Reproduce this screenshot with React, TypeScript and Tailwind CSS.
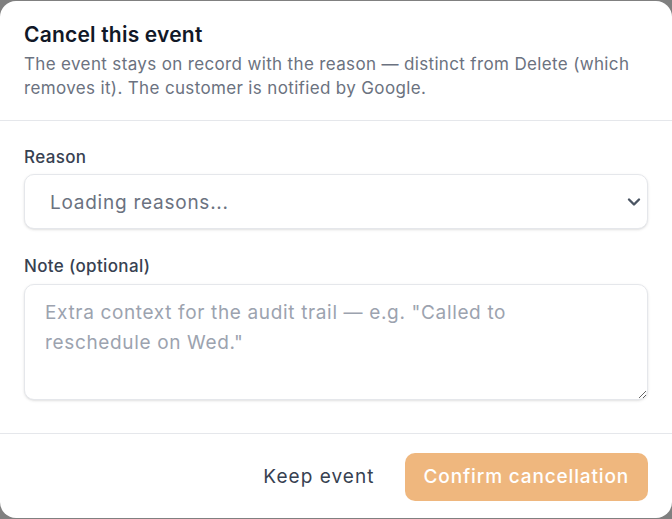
import React from 'react'

export default function App() {
  return (
    <div className="min-h-[519px] bg-[#808080] pt-px" style={{ fontFamily: 'Inter, "Noto Sans", sans-serif' }}>
      <div className="bg-white rounded-2xl overflow-hidden">

        {/* Header */}
        <div className="px-6 pt-5 pb-5 border-b border-[#e5e7eb]">
          <h2 className="text-[21px] leading-[28px] font-semibold tracking-[0.2px] text-[#111827]">Cancel this event</h2>
          <p className="mt-[3px] text-[17px] leading-[24px] tracking-[0.35px] text-[#6b7280]">
            The event stays on record with the reason — distinct from Delete (which removes it). The customer is notified by Google.
          </p>
        </div>

        {/* Body */}
        <div className="px-6 pt-6 pb-[33px]">
          <label className="block text-[17px] leading-[24px] font-medium tracking-[0.35px] text-[#374151] mb-[5px]">Reason</label>
          <div className="relative">
            <select
              disabled
              className="w-full h-[55px] appearance-none rounded-[10px] border border-[#e5e7eb] bg-white pl-[25px] pr-10 pt-[3px] text-[19px] tracking-[0.75px] text-[#6b7280] shadow-sm"
            >
              <option>Loading reasons...</option>
            </select>
            <svg
              className="absolute right-[7px] top-1/2 -translate-y-1/2 pointer-events-none"
              width="14" height="14" viewBox="0 0 14 14" fill="none"
            >
              <path d="M2 4.5l5 5 5-5" stroke="#4b5563" strokeWidth="2.4" strokeLinecap="round" strokeLinejoin="round" />
            </svg>
          </div>

          <label className="block mt-[25px] text-[17px] leading-[24px] font-medium tracking-[0.35px] text-[#374151] mb-[6px]">Note (optional)</label>
          <textarea
            className="block w-full h-[116px] rounded-[10px] border border-[#e5e7eb] bg-white pl-5 pr-8 py-[13px] text-[19px] leading-[30px] tracking-[0.65px] text-[#374151] placeholder:text-[#9ca3af] shadow-sm"
            placeholder={'Extra context for the audit trail — e.g. "Called to reschedule on Wed."'}
          />
        </div>

        {/* Footer */}
        <div className="border-t border-[#e5e7eb] px-6 pt-[19px] pb-[17px] flex justify-end items-center gap-[18px]">
          <button className="px-3 h-12 text-[19px] tracking-[1.05px] text-[#374151]">Keep event</button>
          <button className="h-12 px-[19px] rounded-[10px] bg-amber-600 opacity-50 text-[19px] font-medium tracking-[0.85px] text-white">
            Confirm cancellation
          </button>
        </div>

      </div>
    </div>
  )
}
